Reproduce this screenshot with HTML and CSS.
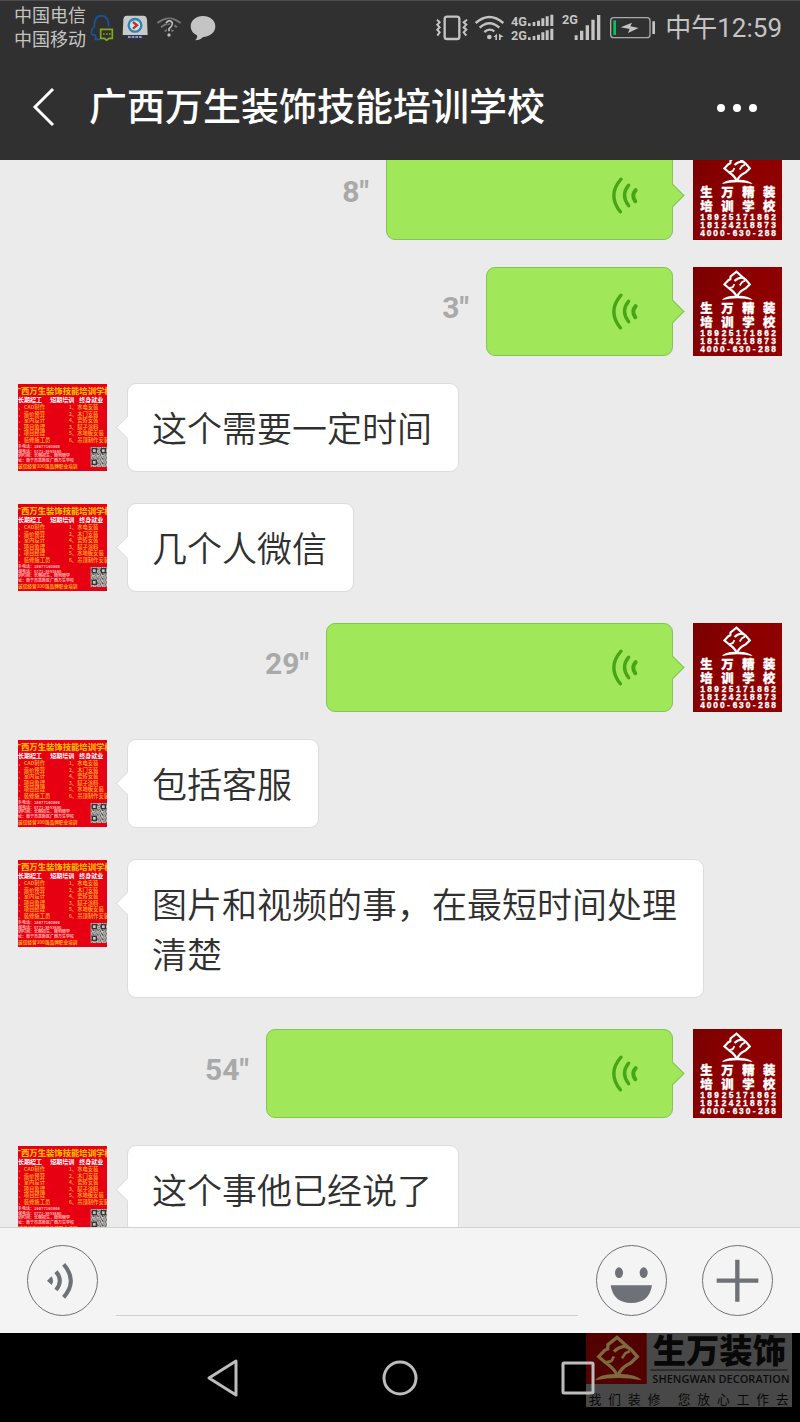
FILE: index.html
```html
<!DOCTYPE html>
<html lang="zh-CN">
<head>
<meta charset="utf-8">
<meta name="viewport" content="width=device-width, initial-scale=1">
<title>广西万生装饰技能培训学校</title>
<link rel="stylesheet" href="styles.css">
</head>
<body>
<svg class="defs" aria-hidden="true">
  <defs>
    <linearGradient id="maroon" x1="0" y1="0" x2="1" y2="0.4">
      <stop offset="0" stop-color="#780000"/><stop offset="0.5" stop-color="#8c0000"/><stop offset="1" stop-color="#900000"/>
    </linearGradient>
    <pattern id="qr" width="14" height="14" patternUnits="userSpaceOnUse">
      <path fill="#444" d="M0 0h5v3h-5zM8 1h3v5h-3zM3 6h4v3h-4zM11 8h3v4h-3zM0 11h3v3h-3zM6 11h3v2h-3z"/>
    </pattern>
    <symbol id="emblem" viewBox="24 8 146 140">
      <g fill="none" stroke="currentColor" stroke-width="10">
        <path d="M93 130Q86 112 60 94L38 75 56 56 65 52 66 39 93 17 122 43Q98 45 84 60"/>
        <path d="M116 43 134 52 154 75 134 94Q104 108 97 130"/>
        <path stroke-width="8" d="M60 92 76 88 84 74M132 58 118 65 108 80"/>
      </g>
      <path fill="currentColor" d="M27 146Q38 128 86 127L104 127Q152 128 167 146Q97 132 27 146z"/>
    </symbol>
    <symbol id="avatar-me" viewBox="0 0 267 267">
      <rect width="267" height="267" fill="url(#maroon)"/>
      <use class="white" href="#emblem" x="84" y="8" width="98" height="92"/>
      <g class="avatar-text" fill="#fff" stroke="#fff">
        <g font-size="37" font-weight="900"><text x="22 85 148 210" y="137">生万精装</text><text x="22 85 148 210" y="179">培训学校</text></g>
        <g class="digits" font-size="25" font-weight="700"><text x="22 43 64 86 107 129 150 171 193 214 235" y="206">18925171862</text><text x="22 43 64 86 107 129 150 171 193 214 235" y="230">18124218873</text><text x="22 41 61 81 102 119 138 158 179 196 215 235" y="256">4000-630-288</text></g>
      </g>
    </symbol>
    <symbol id="avatar-school" viewBox="0 0 267 261">
      <rect width="267" height="261" fill="#e60012"/>
      <g class="avatar-text" font-weight="700">
        <text x="-16" y="30" font-size="25" font-weight="900" fill="#ffb400">广西万生装饰技能培训学校</text>
        <g font-size="18" fill="#fff"><text x="0" y="54">长期招工</text><text x="97" y="54">短期培训</text><text x="184" y="54">终身就业</text></g>
        <g font-size="16" fill="#ff9a1f">
          <text x="1" y="76">、CAD制作</text><text x="1" y="95">、造价预算</text><text x="1" y="115">、室内设计</text><text x="1" y="134">、项目监理</text><text x="1" y="154">、项目经理</text><text x="1" y="173">、装修施工员</text>
          <text x="152" y="76">1、水电安装</text><text x="152" y="95">2、木门安装</text><text x="152" y="115">4、瓷砖安装</text><text x="152" y="134">3、腻子涂料</text><text x="152" y="154">5、水地板安装</text><text x="152" y="173">6、吊顶制作安装</text>
        </g>
        <g font-size="12" fill="#ffb0aa"><text x="0" y="191">系电话：18677160866</text><text x="0" y="206">询电话：0771-3953880</text><text x="0" y="220">训时间：长期招生，随到随学</text><text x="0" y="235">址：南宁市高新区广西万生学校</text></g>
        <text x="0" y="251" font-size="14" fill="#ffab20">诚信经营100强品牌职业培训</text>
      </g>
      <rect x="218" y="189" width="49" height="60" fill="#c9c4c2"/><rect x="218" y="189" width="49" height="60" fill="url(#qr)"/>
      <path fill="#c9c4c2" stroke="#333" stroke-width="4" d="M223 194h12v12h-12zM250 194h12v12h-12zM223 229h12v12h-12z"/>
    </symbol>
    <symbol id="wave" viewBox="0 0 81 110">
      <g fill="none" stroke="#48a515" stroke-linecap="round"><path stroke-width="10" d="M27 6Q-15 54 25 104"/><path stroke-width="10" d="M50 24Q25 54 50 86"/><path stroke-width="12" d="M71 39Q57 55 70 72"/></g>
    </symbol>
  </defs>
</svg>

<div class="phone">
  <header class="header">
    <div class="status">
      <div class="status-side">
        <div class="carriers"><div>中国电信</div><div>中国移动</div></div>
        <div class="notices">
          <svg width="24" height="27" viewBox="0 0 72 81"><path fill="none" stroke="#17559c" stroke-width="5" d="M30 76H16Q20 68 14 62Q2 66 5 50Q7 44 13 38Q12 5 35 5Q56 6 56 38"/><path fill="#303030" stroke="#84a816" stroke-width="5" d="M32 46H67V73H57L50 79 43 73H32z"/><path stroke="#84a816" stroke-width="5" stroke-dasharray="5 4" d="M39 60H62"/></svg>
          <svg width="26" height="25" viewBox="0 0 78 75"><path fill="#c9c9c9" d="M14 2H64Q74 2 75 14L77 60H2L4 14Q5 2 14 2z"/><circle cx="39" cy="31" r="19" fill="#ddd" stroke="#2489b5" stroke-width="7"/><path fill="none" stroke="#bd3036" stroke-width="7" d="M33 21 45 31 33 41"/><path fill="#25335f" d="M14 60H64V72H14z"/><path stroke="#bbb" stroke-width="5" stroke-dasharray="8 3" d="M18 66H60"/></svg>
          <svg width="26" height="23" viewBox="0 0 78 69"><g fill="none" stroke="#777" stroke-width="6"><path d="M4 21Q39-6 74 21M15 34Q39 13 63 34M26 46Q39 35 52 46"/></g><path fill="none" stroke="#303030" stroke-width="13" d="M29 22Q42 8 50 21Q50 30 39 38V46"/><path fill="none" stroke="#bbb" stroke-width="5" d="M30 22Q40 7 49 20Q50 30 39 38V46"/><circle cx="39" cy="57" r="5" fill="#bbb"/></svg>
          <svg width="26" height="26" viewBox="0 0 78 78"><path fill="#c4c4c4" d="M39 3C60 3 76 16 76 34S60 66 39 66Q30 76 15 76Q23 70 21 61Q2 52 2 34C2 16 18 3 39 3z"/></svg>
        </div>
      </div>
      <div class="status-side status-right">
        <svg width="32" height="26" viewBox="0 0 96 78"><rect x="26" y="5" width="44" height="67" rx="7" fill="none" stroke="#c4c4c4" stroke-width="7"/><path fill="none" stroke="#c4c4c4" stroke-width="6" d="M3 14 11 22 4 29 11 37 4 44 11 52 4 62M93 14 83 22 91 29 83 37 91 44 83 52 91 62"/></svg>
        <svg width="29" height="26" viewBox="0 0 87 78"><g fill="none" stroke="#c4c4c4" stroke-width="7"><path d="M2 24Q43-12 85 24M14 38Q43 11 73 38M28 51Q43 38 58 49"/></g><circle cx="43" cy="66" r="7" fill="#c4c4c4"/><path fill="#c4c4c4" d="M55 66 66 56V75H61V66zM72 56 86 65 77 67V75H72z"/></svg>
        <svg class="net" width="44" height="28" viewBox="0 0 132 84" fill="#c4c4c4"><text x="0" y="36" font-size="38">4G</text><text x="0" y="78" font-size="38">2G</text><path d="M51 28h8v8h-8zM65 24h8v12h-8zM78 20h9v16h-9zM91 13h9v23h-9zM104 7h9v29h-9zM118 2h9v34h-9zM51 70h8v8h-8zM65 66h8v12h-8zM78 62h9v16h-9zM91 55h9v23h-9zM104 49h9v29h-9zM118 44h9v34h-9z"/></svg>
        <svg class="net" width="39" height="28" viewBox="0 0 117 84" fill="#c4c4c4"><text x="0" y="31" font-size="38">2G</text><path d="M38 64h9v14h-9zM54 50h10v28h-10zM71 34h10v44h-10zM88 17h10v61h-10zM105 3h10v75h-10z"/></svg>
        <svg class="battery" width="46" height="24" viewBox="0 0 138 72"><rect x="2" y="5" width="118" height="60" rx="9" fill="none" stroke="#aaa" stroke-width="4"/><path fill="#00c853" d="M10 13h8v44h-8z"/><path fill="#c4c4c4" d="M127 16h8v38h-8zM32 34 66 20 61 31 86 36 54 51 59 39z"/></svg>
        <time class="clock">中午12:59</time>
      </div>
    </div>
    <div class="titlebar">
      <button class="plain" aria-label="返回"><svg width="24" height="40" viewBox="0 0 24 40"><path fill="none" stroke="#fff" stroke-width="3" d="M21 2 3 20 21 38"/></svg></button>
      <h1 class="title">广西万生装饰技能培训学校</h1>
      <button class="plain" aria-label="更多"><svg width="42" height="12" viewBox="0 0 42 12" fill="#fff"><circle cx="5" cy="7" r="4"/><circle cx="21" cy="7" r="4"/><circle cx="37" cy="7" r="4"/></svg></button>
    </div>
  </header>

  <main class="chat">
    <div class="row mine"><svg class="avatar"><use href="#avatar-me"/></svg><button class="bubble voice" aria-label="播放语音" style="width:287px"><svg class="wave"><use href="#wave"/></svg></button><span class="length">8"</span></div>
    <div class="row mine"><svg class="avatar"><use href="#avatar-me"/></svg><button class="bubble voice" aria-label="播放语音" style="width:187px"><svg class="wave"><use href="#wave"/></svg></button><span class="length">3"</span></div>
    <div class="row"><svg class="avatar"><use href="#avatar-school"/></svg><p class="bubble">这个需要一定时间</p></div>
    <div class="row"><svg class="avatar"><use href="#avatar-school"/></svg><p class="bubble">几个人微信</p></div>
    <div class="row mine"><svg class="avatar"><use href="#avatar-me"/></svg><button class="bubble voice" aria-label="播放语音" style="width:347px"><svg class="wave"><use href="#wave"/></svg></button><span class="length">29"</span></div>
    <div class="row"><svg class="avatar"><use href="#avatar-school"/></svg><p class="bubble">包括客服</p></div>
    <div class="row"><svg class="avatar"><use href="#avatar-school"/></svg><p class="bubble">图片和视频的事，在最短时间处理清楚</p></div>
    <div class="row mine"><svg class="avatar"><use href="#avatar-me"/></svg><button class="bubble voice" aria-label="播放语音" style="width:407px"><svg class="wave"><use href="#wave"/></svg></button><span class="length">54"</span></div>
    <div class="row"><svg class="avatar"><use href="#avatar-school"/></svg><p class="bubble">这个事他已经说了</p></div>
  </main>

  <form class="composer">
    <button type="button" class="round" aria-label="语音输入"><svg width="71" height="71" viewBox="0 0 213 213"><path fill="#6e7175" d="M60 107 74 94Q82 107 74 120z"/><path fill="none" stroke="#6e7175" stroke-width="12" d="M87 80Q110 107 87 135M110 58Q153 107 110 157"/></svg></button>
    <input class="field" type="text" aria-label="消息">
    <div class="tools">
      <button type="button" class="round" aria-label="表情"><svg width="71" height="71" viewBox="0 0 213 213" fill="#6e7175"><ellipse cx="69" cy="83" rx="12" ry="16"/><ellipse cx="143" cy="83" rx="12" ry="16"/><path d="M44 121H168Q160 174 106 174T44 121z"/></svg></button>
      <button type="button" class="round" aria-label="更多功能"><svg width="71" height="71" viewBox="0 0 213 213"><path stroke="#6e7175" stroke-width="13" d="M44 107H169M106 44V170"/></svg></button>
    </div>
  </form>

  <nav class="navbar">
    <svg class="watermark" viewBox="0 0 618 222" role="img" aria-label="生万装饰">
      <rect width="618" height="222" fill="#484848"/>
      <rect width="182" height="153" fill="#520000"/>
      <use class="gold" href="#emblem" x="24" y="4" width="146" height="140"/>
      <text class="brand" x="200" y="90" font-size="100">生万装饰</text>
      <path stroke="#111" stroke-width="3" d="M194 111H604"/>
      <text class="latin" x="199" y="149" font-size="33">SHENGWAN DECORATION</text>
      <text class="slogan" x="8 67 126 185 275 334 393 452 511 570" y="213" font-size="38">我们装修您放心工作去</text>
    </svg>
    <button class="plain navkey" aria-label="返回键"><svg width="36" height="40" viewBox="0 0 36 40"><path d="M5 20 32 3V37z"/></svg></button>
    <button class="plain navkey" aria-label="主页键"><svg width="36" height="40" viewBox="0 0 36 40"><circle cx="18" cy="20" r="16"/></svg></button>
    <button class="plain navkey" aria-label="最近任务"><svg width="36" height="40" viewBox="0 0 36 40"><rect x="3" y="5" width="30" height="30" rx="1"/></svg></button>
  </nav>
</div>
</body>
</html>
```
FILE: styles.css
```css
* { box-sizing: border-box; }
body {
  margin: 0;
  font-family: Roboto, "Noto Sans CJK SC", sans-serif;
  background: #ebebeb;
}
svg { display: block; flex: none; }
.defs { position: absolute; width: 0; height: 0; }
button { margin: 0; padding: 0; border: 0; font: inherit; }
.plain { background: none; }

.phone { display: flex; flex-direction: column; height: 100vh; }

.header { flex: none; background: #303030; border-top: 1px solid #4c4c4c; }
.status {
  display: flex;
  justify-content: space-between;
  height: 53px;
  padding: 0 18px 0 14px;
  color: #c4c4c4;
}
.status-side { display: flex; align-items: center; gap: 4px; }
.status-right { gap: 7px; }
.carriers { font-size: 18px; line-height: 24px; }
.notices { display: flex; align-items: center; gap: 8px; }
.net { font-weight: 700; }
.battery { margin: 0 2px; }
.clock { font-size: 26px; line-height: 32px; }

.titlebar { display: flex; align-items: center; height: 106px; padding: 0 42px 0 32px; }
.title {
  flex: 1;
  margin: 0 0 0 33px;
  color: #fff;
  font-size: 38px;
  line-height: 48px;
  font-weight: 500;
}

.chat { flex: 1; min-height: 0; overflow: hidden; padding: 0 18px; }
.row { display: flex; align-items: flex-start; gap: 20px; margin-bottom: 31px; }
.row:first-child { margin-top: -9px; }
.mine { flex-direction: row-reverse; margin-bottom: 27px; }
.avatar { width: 89px; height: 89px; }
.white { color: #fff; }
.avatar-text { font-family: "Noto Sans CJK SC", sans-serif; }
.digits { font-family: "Liberation Sans", sans-serif; }

.bubble {
  position: relative;
  max-width: 577px;
  margin: 0;
  padding: 22px 26px 15px 24px;
  border: 1px solid #dcdcdc;
  border-radius: 9px;
  background: #fff;
  color: #303030;
  font-size: 35px;
  line-height: 50px;
  font-weight: 350;
}
.bubble::before {
  content: "";
  position: absolute;
  top: 35px;
  left: -9px;
  width: 16px;
  height: 16px;
  border: solid #dcdcdc;
  border-width: 0 0 1px 1px;
  background: inherit;
  transform: rotate(45deg);
}
.voice {
  display: flex;
  align-items: center;
  justify-content: flex-end;
  height: 89px;
  max-width: none;
  padding: 0 33px;
  border-color: #83c554;
  background: #a0e75a;
}
.voice::before {
  left: auto;
  right: -9px;
  border-color: #83c554;
  border-width: 1px 1px 0 0;
}
.wave { width: 27px; height: 37px; }
.length {
  align-self: center;
  padding-bottom: 8px;
  color: #a9a9a9;
  font-size: 30px;
  line-height: 36px;
  font-weight: 700;
}
.mine .length { margin-right: -3px; }

.composer {
  display: flex;
  flex: none;
  align-items: center;
  gap: 18px;
  height: 106px;
  margin: 0;
  padding: 0 27px;
  border-top: 1px solid #d2d2d2;
  background: #f4f4f5;
}
.round {
  display: flex;
  align-items: center;
  justify-content: center;
  flex: none;
  width: 71px;
  height: 71px;
  border: 1px solid #6e7175;
  border-radius: 50%;
  background: none;
}
.field {
  flex: 1;
  min-width: 0;
  height: 71px;
  padding: 0 8px;
  border: 0;
  border-bottom: 1px solid #cfcfcf;
  background: none;
  font: inherit;
  font-size: 35px;
}
.tools { display: flex; gap: 35px; }

.navbar {
  position: relative;
  display: flex;
  flex: none;
  align-items: center;
  justify-content: center;
  gap: 142px;
  height: 89px;
  background: #000;
}
.navkey { position: relative; }
.navkey svg { fill: none; stroke: #bdbdbd; stroke-width: 3; stroke-linejoin: round; }
.watermark { position: absolute; top: 0; right: 8px; width: 206px; height: 74px; }
.gold { color: #7d6a3c; }
.brand, .slogan { font-family: "Noto Sans CJK SC", sans-serif; fill: #080808; }
.brand { font-weight: 900; }
.latin { font-family: "Open Sans", sans-serif; font-weight: 600; fill: #0c0c0c; }
```
